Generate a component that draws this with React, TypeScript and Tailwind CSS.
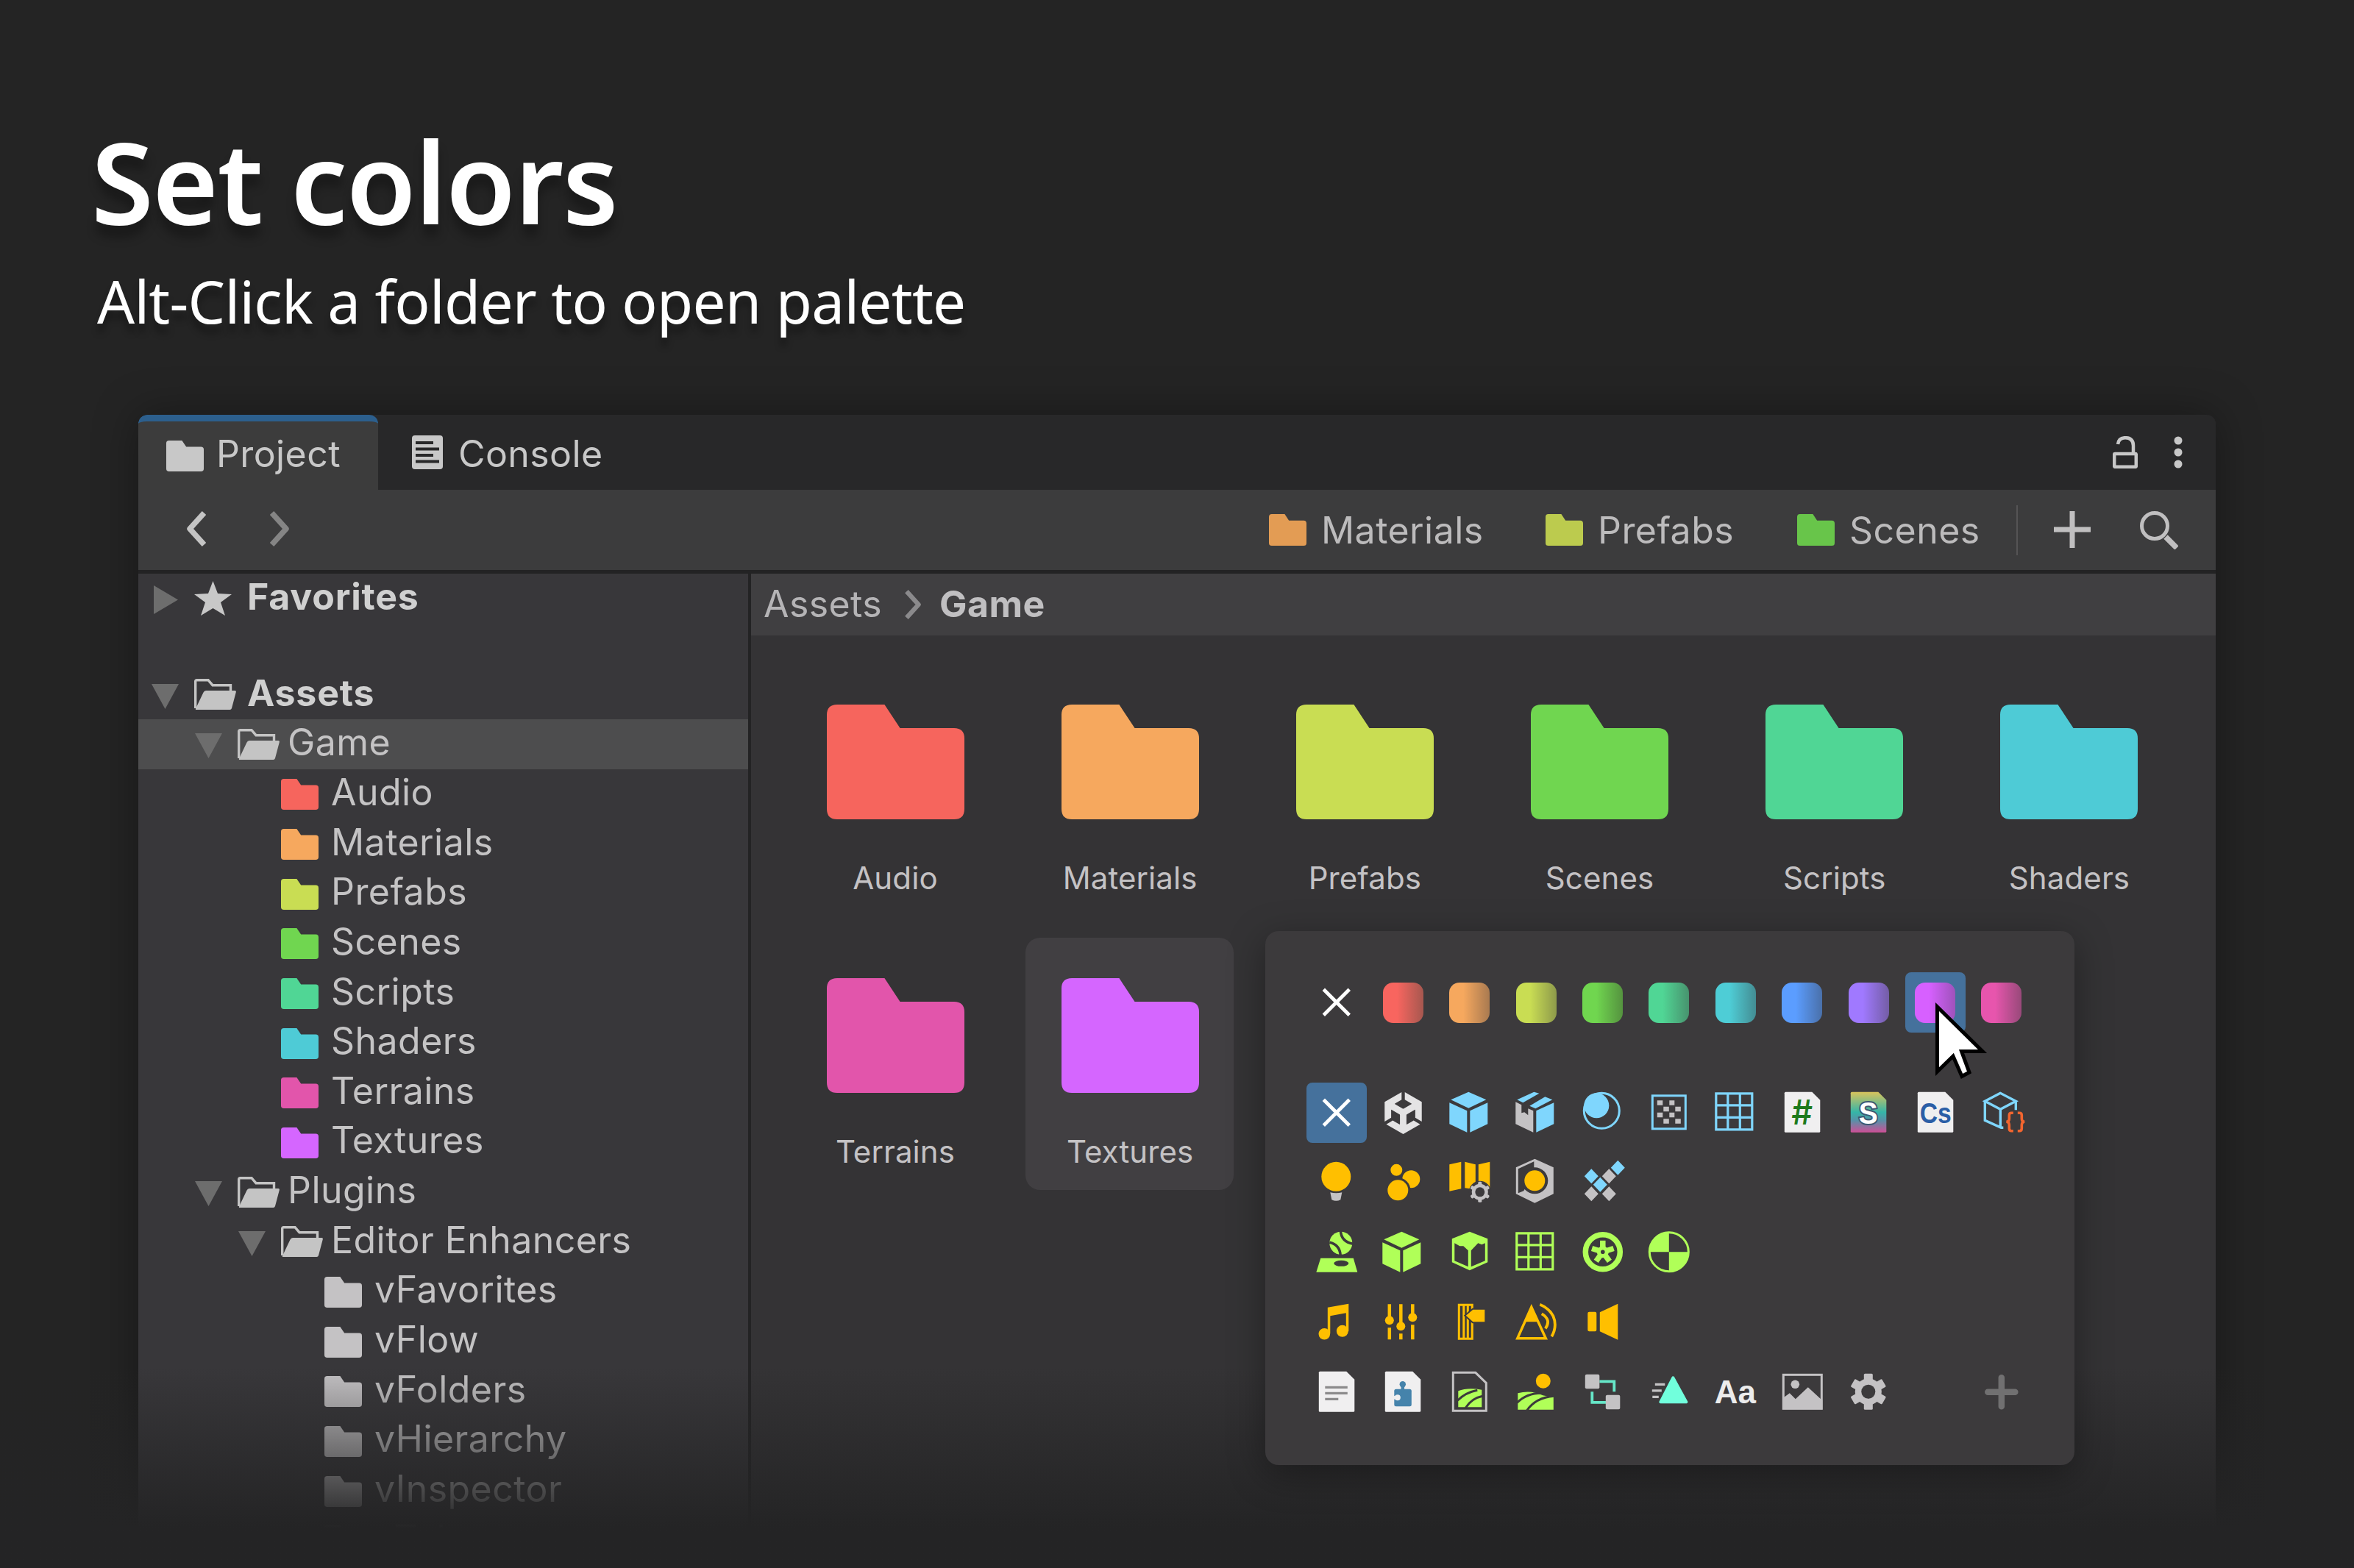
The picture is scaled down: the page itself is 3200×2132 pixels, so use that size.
import type { ReactNode } from 'react';
import { SiUnity } from 'react-icons/si';

const BLUE = '#7fd6fd';
const GREY = '#c4c2c4';
const AMBER = '#ffbf00';
const LIME = '#b0ff58';
const PANEL = '#3c3a3c';

const palette = [
  { name: 'red', fill: 'bg-linear-to-r from-[#f8655f] from-35% to-[#a6574f]' },
  { name: 'orange', fill: 'bg-linear-to-r from-[#f6a85e] from-35% to-[#a97a50]' },
  { name: 'yellow', fill: 'bg-linear-to-r from-[#c9dd53] from-35% to-[#8e9a4a]' },
  { name: 'green', fill: 'bg-linear-to-r from-[#70d64f] from-35% to-[#55933f]' },
  { name: 'mint', fill: 'bg-linear-to-r from-[#50d695] from-35% to-[#47936e]' },
  { name: 'cyan', fill: 'bg-linear-to-r from-[#4ecdd6] from-35% to-[#438d93]' },
  { name: 'blue', fill: 'bg-linear-to-r from-[#5b9dff] from-35% to-[#4a70aa]' },
  { name: 'violet', fill: 'bg-linear-to-r from-[#a079ff] from-35% to-[#745da6]' },
  { name: 'purple', fill: 'bg-linear-to-r from-[#d760ff] from-35% to-[#9f52bb]' },
  { name: 'pink', fill: 'bg-linear-to-r from-[#e755ad] from-35% to-[#98497a]' },
];

const folders = [
  { name: 'Audio', color: 'text-[#f6655d]' },
  { name: 'Materials', color: 'text-[#f6a85e]' },
  { name: 'Prefabs', color: 'text-[#c9dd53]' },
  { name: 'Scenes', color: 'text-[#70d650]' },
  { name: 'Scripts', color: 'text-[#50d695]' },
  { name: 'Shaders', color: 'text-[#4ecbd6]' },
  { name: 'Terrains', color: 'text-[#e255ab]' },
  { name: 'Textures', color: 'text-[#d566ff]' },
];

const indent = ['pl-[18px]', 'pl-[77px]', 'pl-[136px]', 'pl-[195px]'];

const FolderIcon = ({ className }: { className: string }) => (
  <svg viewBox="0 0 186 156" preserveAspectRatio="none" fill="currentColor" className={`shrink-0 ${className}`}>
    <path d="M14 0H78L99 32H172Q186 32 186 46V142Q186 156 172 156H14Q0 156 0 142V14Q0 0 14 0Z" />
  </svg>
);

const OpenFolderIcon = () => (
  <svg viewBox="0 0 57 42" className="h-[42px] w-[57px] shrink-0 text-[#c4c4c4]">
    <path d="M1.7 40V3.5Q1.7 1.7 3.5 1.7H19L25 8.7H49.5V17" fill="none" stroke="currentColor" strokeWidth="3.4" />
    <path d="M16 16H55Q57.5 16 56.7 18.5L51 40Q50.4 42 48.500 42H3Q1.500 42 2 40.500L12.500 18.500Q13.500 16 16 16Z" fill="currentColor" />
  </svg>
);

const Arrow = ({ open = false }: { open?: boolean }) => (
  <svg viewBox="0 0 37 39" className="relative top-[2px] h-[39px] w-[37px] shrink-0 text-[#6d6d6d]" fill="currentColor">
    {open ? <path d="M0 3H37L18.500 37Z" /> : <path d="M3 0V39L36 19.500Z" />}
  </svg>
);

interface RowProps {
  label: string;
  depth: number;
  icon: ReactNode;
  open?: boolean;
  leaf?: boolean;
  bold?: boolean;
  selected?: boolean;
}

const TreeRow = ({ label, depth, icon, open, leaf, bold, selected }: RowProps) => (
  <div className={`flex h-[67.66px] shrink-0 items-center ${indent[depth]} ${selected ? 'bg-[#4d4d4e]' : ''}`}>
    {leaf ? <div className="w-[37px]" /> : <Arrow open={open} />}
    <div className="ml-[21px] flex w-[57px] shrink-0">{icon}</div>
    <span
      className={`pb-[5px] whitespace-nowrap text-[50px] leading-none ${
        bold ? 'ml-[15px] font-bold tracking-[0.8px] text-[#d0d0d0]' : 'ml-[11px] tracking-[0.45px] text-[#c4c3c4]'
      }`}
    >
      {label}
    </span>
  </div>
);

const Sidebar = () => (
  <div className="flex w-[829px] shrink-0 flex-col overflow-hidden bg-[#38373a]">
    <div className="mb-[62.600px]">
      <TreeRow
        label="Favorites"
        depth={0}
        bold
        icon={
          <svg viewBox="0 0 51 47" className="h-[47px] w-[51px]" fill="#c8c8c8">
            <path d="M25.500 0L32 17L51 18L36 29L42 47L25.500 37L9 47L15 29L0 18L19 17Z" />
          </svg>
        }
      />
    </div>
    <TreeRow label="Assets" depth={0} bold open icon={<OpenFolderIcon />} />
    <TreeRow label="Game" depth={1} open selected icon={<OpenFolderIcon />} />
    {folders.map((f) => (
      <TreeRow key={f.name} label={f.name} depth={2} leaf icon={<FolderIcon className={`mt-[2px] h-[42px] w-[51px] ${f.color}`} />} />
    ))}
    <TreeRow label="Plugins" depth={1} open icon={<OpenFolderIcon />} />
    <TreeRow label="Editor Enhancers" depth={2} open icon={<OpenFolderIcon />} />
    {['vFavorites', 'vFlow', 'vFolders', 'vHierarchy', 'vInspector', 'vTabs'].map((name) => (
      <TreeRow key={name} label={name} depth={3} leaf icon={<FolderIcon className="mt-[2px] h-[42px] w-[51px] text-[#c4c2c4]" />} />
    ))}
  </div>
);

const TabBar = () => (
  <div className="flex h-[102px] shrink-0 items-stretch bg-[#282829] text-[50px] leading-none tracking-[0.4px] text-[#c8c8c8]">
    <div className="flex w-[326px] items-center rounded-t-[12px] border-t-[9px] border-[#2c5f8d] bg-[#3c3c3c] pl-[38px]">
      <FolderIcon className="h-[42px] w-[51px] text-[#c8c8c8]" />
      <span className="ml-[17px] pb-[5px]">Project</span>
    </div>
    <div className="flex items-center pl-[46px]">
      <svg viewBox="0 0 42 46" className="h-[46px] w-[42px]">
        <rect width="42" height="46" rx="4" fill="#c8c8c8" />
        <path d="M5 10H29M5 18.500H37M5 27H29M5 35.500H37" stroke="#282829" strokeWidth="4" />
      </svg>
      <span className="ml-[21px] pt-[3px]">Console</span>
    </div>
    <div className="ml-auto flex items-center pr-[45px]">
      <svg viewBox="0 0 34 44" className="h-[44px] w-[34px]" fill="none" stroke="#c8c8c8" strokeWidth="4.500">
        <rect x="2.200" y="24" width="29.600" height="17.800" rx="1" />
        <path d="M7 11Q8 2.200 17 2.200Q28 2.200 28 13V24" />
      </svg>
      <svg viewBox="0 0 12 44" className="ml-[49px] h-[44px] w-[12px]" fill="#c8c8c8">
        <circle cx="6" cy="6" r="5.500" />
        <circle cx="6" cy="22" r="5.500" />
        <circle cx="6" cy="38" r="5.500" />
      </svg>
    </div>
  </div>
);

const Chevron = ({ className, left = false }: { className: string; left?: boolean }) => (
  <svg viewBox="0 0 28 48" className={className} fill="none" stroke="currentColor" strokeWidth="7.500" strokeLinejoin="round">
    <path d={left ? 'M25.500 2.500L6 24L25.500 45.500' : 'M2.500 2.500L22 24L2.500 45.500'} />
  </svg>
);

const Bookmark = ({ label, color, className }: { label: string; color: string; className: string }) => (
  <div className={`flex items-center ${className}`}>
    <FolderIcon className={`h-[43px] w-[51px] ${color}`} />
    <span className="ml-[20px]">{label}</span>
  </div>
);

const Toolbar = () => (
  <div className="flex h-[109px] shrink-0 items-center bg-[#3c3c3d] text-[50px] leading-none tracking-[0.45px] text-[#bcbbbc]">
    <Chevron left className="mb-[3px] ml-[64px] h-[48px] w-[28px] text-[#c4c4c4]" />
    <Chevron className="mb-[3px] ml-[87px] h-[48px] w-[28px] text-[#858585]" />
    <div className="ml-auto flex items-center">
      <Bookmark label="Materials" color="text-[#e39c54]" className="w-[376px]" />
      <Bookmark label="Prefabs" color="text-[#bccb4e]" className="w-[342px]" />
      <Bookmark label="Scenes" color="text-[#68c54a]" className="w-[298px]" />
      <div className="h-[68px] w-[2px] bg-[#555455]" />
      <svg viewBox="0 0 50 50" className="mb-[2px] ml-[49px] h-[50px] w-[50px]" stroke="#c0bfc0" strokeWidth="7">
        <path d="M25 0V50M0 25H50" />
      </svg>
      <svg viewBox="0 0 52 52" className="mr-[51px] ml-[67px] h-[52px] w-[52px]" fill="none" stroke="#c0bfc0" strokeWidth="5">
        <circle cx="20" cy="20" r="17.500" />
        <path d="M35 35L50 50" strokeWidth="7.500" />
      </svg>
    </div>
  </div>
);

const FolderGrid = () => (
  <div className="grid grid-cols-[repeat(6,283px)] gap-x-[36.200px] gap-y-[29px] pt-[39px] pl-[54px]">
    {folders.map((f) => (
      <div
        key={f.name}
        className={`flex h-[343px] flex-col items-center rounded-[20px] pt-[55px] pl-px ${f.name === 'Textures' ? 'bg-[#413f42]' : ''}`}
      >
        <FolderIcon className={`h-[156px] w-[187px] ${f.color}`} />
        <span className="mt-[55px] text-[42px] leading-[50px] tracking-[0.1px] text-[#c4c2c4]">{f.name}</span>
      </div>
    ))}
  </div>
);

const Icon = ({ children }: { children: ReactNode }) => (
  <svg viewBox="0.7 0.7 64 64" className="h-16 w-16 overflow-visible">
    {children}
  </svg>
);

const Cross = () => (
  <Icon>
    <path d="M15 15L50 50M50 15L15 50" stroke="#fff" strokeWidth="4.800" />
  </Icon>
);

const Cube = ({ color }: { color: string }) => (
  <Icon>
    <g fill={color}>
      <path d="M31 4.500L55 15L31 26.500L7 15Z" />
      <path d="M5 19L29 30V59.500L5 48Z" />
      <path d="M57 19L33 30V59.500L57 48Z" />
    </g>
  </Icon>
);

const Grid = ({ color }: { color: string }) => (
  <Icon>
    <path d="M6.500 6.500H55.500V55.500H6.500ZM22.500 6V56M39 6V56M6 22.500H56M6 39H56" fill="none" stroke={color} strokeWidth="3.200" />
  </Icon>
);

interface GearProps {
  cx: number;
  cy: number;
  r: number;
  hole: number;
  body: number;
  tooth: number;
}

const Gear = ({ cx, cy, r, hole, body, tooth }: GearProps) => (
  <g>
    {[0, 60, 120].map((a) => (
      <rect key={a} x={cx - tooth / 2} y={cy - r} width={tooth} height={r * 2} rx="1.500" fill={GREY} transform={`rotate(${a} ${cx} ${cy})`} />
    ))}
    <circle cx={cx} cy={cy} r={body} fill={GREY} />
    <circle cx={cx} cy={cy} r={hole} fill={PANEL} />
  </g>
);

const doc = 'M10 4.500H46L57 15.500V58Q57 59.500 55.500 59.500H10Q8.500 59.500 8.500 58V6Q8.500 4.500 10 4.500Z';

const iconRows: ReactNode[][] = [
  [
    <SiUnity className="h-[57px] w-[57px] text-[#e4e3e4]" />,
    <Cube color={BLUE} />,
    <Icon>
      <path d="M5 18L13 22V33L17 32L22 36V27L29 30V59.500L5 48Z" fill={GREY} />
      <g fill={BLUE}>
        <path d="M33 30L57 19V48L33 59.500Z" />
        <path d="M7 15L30 4.500L37 6.500L15 19Z" />
        <path d="M24 23.500L45 11L55 15L32 27Z" />
      </g>
    </Icon>,
    <Icon>
      <circle cx="31" cy="30" r="24" fill="none" stroke={BLUE} strokeWidth="3" />
      <circle cx="24" cy="23" r="17" fill={BLUE} />
    </Icon>,
    <Icon>
      <rect x="10" y="9.500" width="45" height="45" fill="none" stroke={BLUE} strokeWidth="3" />
      <path
        d="M16.500 16H24V22.500H16.500ZM33 16H40V22.500H33ZM25 24.500H32.500V31H25ZM41 24.500H48.500V31H41ZM16.500 32.500H24V39H16.500ZM33 32.500H40V39H33ZM25 41H32.500V47.500H25ZM41 41H48.500V47.500H41Z"
        fill={GREY}
      />
    </Icon>,
    <Grid color={BLUE} />,
    <Icon>
      <path d={doc} fill="#f0eff0" />
      <text x="32.500" y="49" textAnchor="middle" fontSize="46" fontWeight="500" fontFamily="Inter" textLength="29" lengthAdjust="spacingAndGlyphs" fill="#1d7a1d">#</text>
    </Icon>,
    <Icon>
      <defs>
        <linearGradient id="shader" x1="0" y1="0" x2="0" y2="1">
          <stop offset="0" stopColor="#d8c35c" />
          <stop offset="0.500" stopColor="#35b5a8" />
          <stop offset="0.700" stopColor="#5791a8" />
          <stop offset="1" stopColor="#cf4f97" />
        </linearGradient>
      </defs>
      <path d={doc} fill="url(#shader)" />
      <text x="32.500" y="47.500" textAnchor="middle" fontSize="43" fontWeight="700" fontFamily="Liberation Sans" textLength="26" lengthAdjust="spacingAndGlyphs" fill="#fff" stroke="#3c5872" strokeWidth="4" paintOrder="stroke">S</text>
    </Icon>,
    <Icon>
      <path d={doc} fill="#f0eff0" />
      <text x="33" y="47" textAnchor="middle" fontSize="38" fontWeight="700" fontFamily="Liberation Sans" textLength="43" lengthAdjust="spacingAndGlyphs" fill="#2b5ea6">Cs</text>
    </Icon>,
    <Icon>
      <path d="M31 6L10 17L31 28L52 17ZM10 17V43L32 53H35M31 28V53M52 17V29" fill="none" stroke={BLUE} strokeWidth="3.400" />
      <path d="M48.500 33H46Q43 33 43 36V41Q43 45 39 45Q43 45 43 50V54Q43 57.500 46 57.500H48.500M54.500 33H57Q60 33 60 36V41Q60 45 64 45Q60 45 60 50V54Q60 57.500 57 57.500H54.500" fill="none" stroke="#f2652f" strokeWidth="3.600" />
    </Icon>,
  ],
  [
    <Icon>
      <circle cx="32" cy="24.500" r="20" fill={AMBER} />
      <path d="M24 46Q32 48 40 46L38 56Q32 59 26 56Z" fill={GREY} />
    </Icon>,
    <Icon>
      <g fill={AMBER} stroke={PANEL} strokeWidth="3">
        <circle cx="24" cy="15.500" r="9.500" />
        <circle cx="44" cy="28" r="13.500" />
        <circle cx="26" cy="43" r="15.500" />
      </g>
    </Icon>,
    <Icon>
      <path d="M5 8L21 4.500V41L5 44.500ZM26 4.500L40.500 8V42L26 40ZM44.500 8L60 4.500V40L44.500 40Z" fill={AMBER} />
      <circle cx="46.500" cy="45.500" r="15" fill={PANEL} />
      <Gear cx={46.5} cy={45.5} r={14} body={11} hole={6.5} tooth={5} />
    </Icon>,
    <Icon>
      <path d="M31 0.500L56.500 12V48L31 60.500L5.500 48V12Z" fill={GREY} />
      <path d="M8.500 14L30 4V20L16 44L8.500 47Z" fill={PANEL} />
      <circle cx="31" cy="30" r="18" fill={PANEL} />
      <circle cx="31" cy="30" r="14" fill={AMBER} />
    </Icon>,
    <Icon>
      <path d="M17 14L26.500 24L17 34L7.500 24ZM29 25.500L38.500 35.500L29 45.500L19.500 35.500ZM53 2.500L62.500 12.500L53 22.500L43.500 12.500Z" fill={BLUE} />
      <path d="M41 14L50.500 24L41 34L31.500 24ZM17 38L26.500 48L17 58L7.500 48ZM41 38L50.500 48L41 58L31.500 48Z" fill={GREY} />
    </Icon>,
  ],
  [
    <Icon>
      <circle cx="38.500" cy="20" r="15.500" fill={LIME} />
      <path d="M38 3Q39 18 55 21M23 19Q37 22 38 37" fill="none" stroke={PANEL} strokeWidth="3.500" />
      <path d="M11 40.500H55.500L61 59.500H5Z" fill={LIME} />
      <ellipse cx="39" cy="47.500" rx="10" ry="4" fill={PANEL} />
    </Icon>,
    <Cube color={LIME} />,
    <Icon>
      <path d="M32.500 4.500L57 14V46L32.500 57L8.500 46V14Z" fill={LIME} />
      <path d="M12 20L19 24L24 24L30.500 30V52L12 44ZM53.500 20L49 22L44 20L34.500 30V52L53.500 44Z" fill={PANEL} />
    </Icon>,
    <Grid color={LIME} />,
    <Icon>
      <circle cx="32.500" cy="32" r="23.500" fill="none" stroke={LIME} strokeWidth="7.500" />
      {[0, 72, 144, 216, 288].map((a) => (
        <path key={a} d="M32.500 32V16.500" stroke={LIME} strokeWidth="7.500" transform={`rotate(${a} 32.5 32)`} />
      ))}
      <circle cx="32.500" cy="32" r="8" fill={LIME} />
      <circle cx="32.500" cy="32" r="2.800" fill={PANEL} />
    </Icon>,
    <Icon>
      <circle cx="32.500" cy="32" r="26.500" fill="none" stroke={LIME} strokeWidth="3" />
      <path d="M32.500 32V5A27 27 0 0 0 5.500 32ZM32.500 32V59A27 27 0 0 0 59.500 32Z" fill={LIME} />
    </Icon>,
  ],
  [
    <Icon>
      <g fill={AMBER}>
        <circle cx="16" cy="48.500" r="7.800" />
        <circle cx="40.500" cy="44.500" r="8" />
        <path d="M20.500 48V12.500L49 7.500V45H45.500V20L24 24V48Z" />
      </g>
    </Icon>,
    <Icon>
      <path d="M14.500 8V29M14.500 40V56M30 8V37M30 48V56M46 8V25M46 36V56" stroke={AMBER} strokeWidth="4.500" />
      <g fill={AMBER}>
        <circle cx="14.500" cy="30" r="6" />
        <circle cx="30" cy="38" r="6" />
        <circle cx="46" cy="26" r="6" />
      </g>
    </Icon>,
    <Icon>
      <path d="M18 9H36V55H18ZM24.500 9V55M30 9V55" fill="none" stroke={AMBER} strokeWidth="3" />
      <path d="M27.500 23.500L37 15.500H53V32H37Z" fill={AMBER} stroke={PANEL} strokeWidth="4" paintOrder="stroke" />
    </Icon>,
    <Icon>
      <path d="M26.500 12L46 54.500H7.500Z" fill="none" stroke={AMBER} strokeWidth="3.500" />
      <path d="M26.500 10L36.500 32H16.500Z" fill={AMBER} />
      <path d="M38 8.500Q50 13 56 24Q62 38 54 52M40.500 21Q54 29 45.500 41" fill="none" stroke={AMBER} strokeWidth="3.800" />
    </Icon>,
    <Icon>
      <path d="M14 18.500H22Q24 18.500 24 20.500V43Q24 45 22 45H14Q12 45 12 43V20.500Q12 18.500 14 18.500ZM28.500 19L53 7.500V56.500L28.500 45Z" fill={AMBER} />
    </Icon>,
  ],
  [
    <Icon>
      <path d={doc} fill="#f0eff0" />
      <path d="M17 26H47.500M17 34H47.500M17 42H35" stroke="#8b8a8b" strokeWidth="3.200" />
    </Icon>,
    <Icon>
      <path d={doc} fill="#f0eff0" />
      <rect x="21" y="28.500" width="23.500" height="23.500" rx="2.500" fill="#4583ab" />
      <circle cx="32.500" cy="22" r="4.200" fill="#4583ab" />
      <path d="M32.500 22V32" stroke="#4583ab" strokeWidth="4.500" />
      <circle cx="25.500" cy="40" r="4" fill="#f0eff0" />
      <path d="M20 40H26" stroke="#f0eff0" strokeWidth="4.500" />
    </Icon>,
    <Icon>
      <path d="M10 6H40.500L55 20V58H10Z" fill="none" stroke={GREY} strokeWidth="3" />
      <path d="M17 31Q30 26 49 29.500V53H17Z" fill={LIME} />
      <path d="M16 44Q27 33 43 30M27 54Q35 41 50 38" fill="none" stroke={PANEL} strokeWidth="3" />
    </Icon>,
    <Icon>
      <circle cx="42.500" cy="17.500" r="10" fill={AMBER} />
      <path d="M8 34Q26 29 42 37Q50 39 56.500 38V56.500H8Z" fill={LIME} />
      <path d="M7 47Q20 34 40 34M20 58Q32 40 57 38" fill="none" stroke={PANEL} strokeWidth="3" />
    </Icon>,
    <Icon>
      <path d="M28 18H48V32M18 32V46.500H38" fill="none" stroke="#66e6c8" strokeWidth="3.800" />
      <rect x="8.500" y="8.500" width="19.500" height="19.500" rx="2" fill={GREY} />
      <rect x="36.500" y="36.500" width="19.500" height="19.500" rx="2" fill={GREY} />
    </Icon>,
    <Icon>
      <path d="M38 13L56 46H21Z" fill="#71ffdc" stroke="#71ffdc" strokeWidth="4" strokeLinejoin="round" />
      <path d="M13.500 22H27M9.500 30.500H22.500M10 39H18.500" stroke={GREY} strokeWidth="3.200" />
    </Icon>,
    <Icon>
      <text x="32.500" y="48" textAnchor="middle" fontSize="44" fontWeight="700" fontFamily="Liberation Sans" fill="#ececec">Aa</text>
    </Icon>,
    <Icon>
      <rect x="7" y="9" width="52" height="46" fill="none" stroke={GREY} strokeWidth="3" />
      <circle cx="23" cy="22" r="5.800" fill={GREY} />
      <path d="M6 41L15.500 34L23.500 42L40.500 26L60 44V56H6Z" fill={GREY} />
    </Icon>,
    <Icon>
      <Gear cx={32.5} cy={32} r={24.5} body={18} hole={9.5} tooth={12} />
    </Icon>,
  ],
];

const Cell = ({ selected = false, children }: { selected?: boolean; children?: ReactNode }) => (
  <div className={`flex h-[82px] w-[82px] shrink-0 items-center justify-center rounded-[8px] ${selected ? 'bg-[#45719c]' : ''}`}>
    {children}
  </div>
);

const Cursor = () => (
  <svg viewBox="0 0 72 108" className="absolute top-[96px] left-[911px] h-[108px] w-[72px] overflow-visible">
    <path d="M2.500 7V95L24 74L36 101.500L46 96L35.500 67.500H64Z" fill="#fff" stroke="#000" strokeWidth="5" />
  </svg>
);

const PalettePopup = () => (
  <div className="absolute top-[1266px] left-[1720px] h-[726px] w-[1100px] rounded-[18px] bg-[#3c3a3c] pt-[56px] pl-[56px] shadow-[0_12px_50px_rgba(0,0,0,0.35)]">
    <div className="flex gap-[8.400px]">
      <Cell>
        <Cross />
      </Cell>
      {palette.map((c) => (
        <Cell key={c.name} selected={c.name === 'purple'}>
          <div className={`h-[55px] w-[55px] rounded-[14px] ${c.fill}`} />
        </Cell>
      ))}
    </div>
    <div className="mt-[68px] flex flex-col gap-[13px]">
      {iconRows.map((row, i) => (
        <div key={i} className="flex gap-[8.400px]">
          {i === 0 && (
            <Cell selected>
              <Cross />
            </Cell>
          )}
          {row.map((icon, j) => (
            <Cell key={j}>{icon}</Cell>
          ))}
          {i === 4 && (
            <>
              <Cell />
              <Cell>
                <Icon>
                  <path d="M32.500 13V52M14 32.500H51" stroke="#717071" strokeWidth="8.500" strokeLinecap="round" />
                </Icon>
              </Cell>
            </>
          )}
        </div>
      ))}
    </div>
    <Cursor />
  </div>
);

export default function App() {
  return (
    <div className="relative flex h-[2132px] w-[3200px] flex-col overflow-hidden bg-[#242424] font-['Inter',sans-serif]">
      <div className="h-[564px] shrink-0 pt-[135px] pl-[124px] font-['Noto_Sans',sans-serif] text-white">
        <h1 className="text-[154px] leading-[220px] font-semibold tracking-[-1.600px] whitespace-nowrap [text-shadow:0_16px_14px_rgba(0,0,0,0.3)]">
          Set colors
        </h1>
        <p className="mt-[8px] pl-[8px] text-[80px] leading-[92px] tracking-[-0.700px] whitespace-nowrap [text-shadow:0_12px_10px_rgba(0,0,0,0.3)]">
          Alt-Click a folder to open palette
        </p>
      </div>

      <div className="mx-[188px] flex min-h-0 flex-1 flex-col overflow-hidden rounded-t-[12px] bg-[#232324] shadow-[0_0_60px_rgba(0,0,0,0.35)]">
        <TabBar />
        <Toolbar />
        <div className="mt-[5px] flex min-h-0 flex-1 gap-1">
          <Sidebar />
          <div className="flex-1 bg-[#343335]">
            <div className="flex h-[84px] items-center bg-[#403f41] pb-[3px] pl-[17px] text-[50px] leading-none tracking-[0.4px] text-[#b5b4b6]">
              <span>Assets</span>
              <Chevron className="mt-[2px] ml-[31px] h-[40px] w-[24px] text-[#8b8a8c]" />
              <span className="ml-[23px] font-bold text-[#c0bfc1]">Game</span>
            </div>
            <div className="-mt-[0px]">
              <FolderGrid />
            </div>
          </div>
        </div>
      </div>

      <div className="absolute inset-x-0 bottom-0 h-[272px] bg-linear-to-b from-transparent to-[#242425] to-80%" />
      <PalettePopup />
    </div>
  );
}
